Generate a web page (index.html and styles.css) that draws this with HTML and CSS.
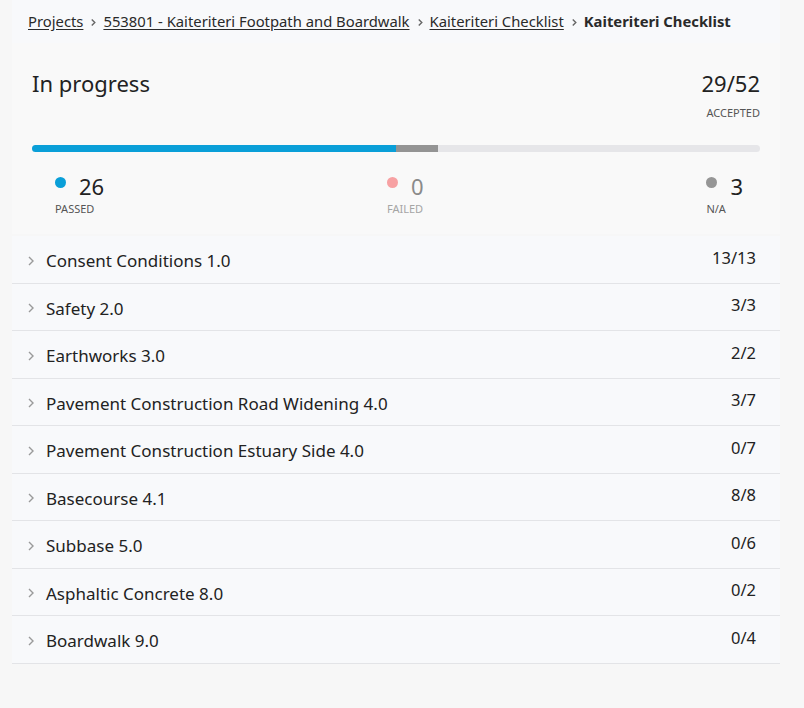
FILE: index.html
```html
<!DOCTYPE html>
<html lang="en">
<head>
<meta charset="utf-8">
<title>Kaiteriteri Checklist</title>
<link rel="stylesheet" href="styles.css">
</head>
<body>
<div class="page">
  <nav class="crumbs">
    <a href="#">Projects</a>
    <span class="sep"><svg viewBox="0 0 8 10" width="7" height="9"><path d="M2 1.5 L5.5 5 L2 8.5" fill="none" stroke="#666" stroke-width="1.6"/></svg></span>
    <a href="#">553801 - Kaiteriteri Footpath and Boardwalk</a>
    <span class="sep"><svg viewBox="0 0 8 10" width="7" height="9"><path d="M2 1.5 L5.5 5 L2 8.5" fill="none" stroke="#666" stroke-width="1.6"/></svg></span>
    <a href="#">Kaiteriteri Checklist</a>
    <span class="sep"><svg viewBox="0 0 8 10" width="7" height="9"><path d="M2 1.5 L5.5 5 L2 8.5" fill="none" stroke="#666" stroke-width="1.6"/></svg></span>
    <span class="current">Kaiteriteri Checklist</span>
  </nav>

  <section class="summary">
    <div class="summary-head">
      <h1 class="status">In progress</h1>
      <div class="accepted">
        <div class="big">29/52</div>
        <div class="label">ACCEPTED</div>
      </div>
    </div>
    <div class="bar">
      <div class="seg passed" style="width:50%"></div>
      <div class="seg na" style="width:5.77%"></div>
    </div>
    <div class="stats">
      <div class="stat">
        <div class="stat-row"><span class="dot blue"></span><span class="num">26</span></div>
        <div class="label">PASSED</div>
      </div>
      <div class="stat failed">
        <div class="stat-row"><span class="dot pink"></span><span class="num">0</span></div>
        <div class="label">FAILED</div>
      </div>
      <div class="stat">
        <div class="stat-row"><span class="dot grey"></span><span class="num">3</span></div>
        <div class="label">N/A</div>
      </div>
    </div>
  </section>

  <ul class="list">
    <li class="item"><span class="chev"><svg viewBox="0 0 8 12" width="8" height="12"><path d="M2 2 L6 6 L2 10" fill="none" stroke="#9a9a9a" stroke-width="1.4"/></svg></span><span class="name">Consent Conditions 1.0</span><span class="count">13/13</span></li>
    <li class="item"><span class="chev"><svg viewBox="0 0 8 12" width="8" height="12"><path d="M2 2 L6 6 L2 10" fill="none" stroke="#9a9a9a" stroke-width="1.4"/></svg></span><span class="name">Safety 2.0</span><span class="count">3/3</span></li>
    <li class="item"><span class="chev"><svg viewBox="0 0 8 12" width="8" height="12"><path d="M2 2 L6 6 L2 10" fill="none" stroke="#9a9a9a" stroke-width="1.4"/></svg></span><span class="name">Earthworks 3.0</span><span class="count">2/2</span></li>
    <li class="item"><span class="chev"><svg viewBox="0 0 8 12" width="8" height="12"><path d="M2 2 L6 6 L2 10" fill="none" stroke="#9a9a9a" stroke-width="1.4"/></svg></span><span class="name">Pavement Construction Road Widening 4.0</span><span class="count">3/7</span></li>
    <li class="item"><span class="chev"><svg viewBox="0 0 8 12" width="8" height="12"><path d="M2 2 L6 6 L2 10" fill="none" stroke="#9a9a9a" stroke-width="1.4"/></svg></span><span class="name">Pavement Construction Estuary Side 4.0</span><span class="count">0/7</span></li>
    <li class="item"><span class="chev"><svg viewBox="0 0 8 12" width="8" height="12"><path d="M2 2 L6 6 L2 10" fill="none" stroke="#9a9a9a" stroke-width="1.4"/></svg></span><span class="name">Basecourse 4.1</span><span class="count">8/8</span></li>
    <li class="item"><span class="chev"><svg viewBox="0 0 8 12" width="8" height="12"><path d="M2 2 L6 6 L2 10" fill="none" stroke="#9a9a9a" stroke-width="1.4"/></svg></span><span class="name">Subbase 5.0</span><span class="count">0/6</span></li>
    <li class="item"><span class="chev"><svg viewBox="0 0 8 12" width="8" height="12"><path d="M2 2 L6 6 L2 10" fill="none" stroke="#9a9a9a" stroke-width="1.4"/></svg></span><span class="name">Asphaltic Concrete 8.0</span><span class="count">0/2</span></li>
    <li class="item"><span class="chev"><svg viewBox="0 0 8 12" width="8" height="12"><path d="M2 2 L6 6 L2 10" fill="none" stroke="#9a9a9a" stroke-width="1.4"/></svg></span><span class="name">Boardwalk 9.0</span><span class="count">0/4</span></li>
  </ul>
</div>
</body>
</html>
```

FILE: styles.css
```css
* { box-sizing: border-box; }
html, body { margin: 0; padding: 0; }
body {
  background: #f7f7f7;
  font-family: "Noto Sans", "Open Sans", sans-serif;
  color: #222;
}
.page {
  width: 768px;
  margin-left: 12px;
}
.crumbs {
  height: 43px;
  background: #f8f9fb;
  display: flex;
  align-items: center;
  padding: 0 0 2px 16px;
  font-size: 14.8px;
  color: #2a2a2a;
}
.crumbs a {
  color: #2a2a2a;
  text-decoration: underline;
  text-underline-offset: 2px;
}
.crumbs .sep {
  display: flex;
  align-items: center;
  margin: 3px 6px 0 7px;
}
.crumbs .current { font-weight: 700; }

.summary {
  background: #f9f9f9;
  padding: 24px 20px 18px 20px;
}
.summary-head {
  display: flex;
  justify-content: space-between;
  align-items: flex-start;
}
.status {
  margin: 0;
  font-size: 22px;
  font-weight: 400;
  line-height: 32px;
  color: #222;
}
.accepted { text-align: right; }
.big {
  font-size: 22px;
  line-height: 32px;
  color: #222;
}
.label {
  font-size: 11px;
  line-height: 14px;
  color: #555;
  margin-top: 5px;
}
.accepted .label { margin-top: 7px; }
.bar {
  margin-top: 25px;
  height: 7px;
  border-radius: 4px;
  background: #e6e6e9;
  display: flex;
  overflow: hidden;
}
.seg { height: 100%; }
.seg.passed { background: #0a9fd8; }
.seg.na { background: #949494; }

.stats {
  display: flex;
  justify-content: space-between;
  padding: 0 17px 0 23px;
  margin-top: 21px;
}
.stat { display: flex; flex-direction: column; align-items: center; }
.stat-row { display: flex; align-items: center; gap: 13px; }
.dot {
  width: 11px;
  height: 11px;
  border-radius: 50%;
  margin-top: -8px;
}
.dot.blue { background: #0a9fd8; }
.dot.pink { background: #f7a1a3; }
.dot.grey { background: #969696; }
.num {
  font-size: 22px;
  line-height: 26px;
  color: #222;
}
.stat .label { margin-top: 3px; align-self: flex-start; }
.stat.failed .num { color: #8a8a8a; }
.stat.failed .label { color: #a5a5a5; }

.list {
  list-style: none;
  margin: 2px 0 0 0;
  padding: 0;
  background: #f8f9fb;
}
.item {
  display: flex;
  align-items: center;
  height: 47.5px;
  border-bottom: 1px solid #e3e4e7;
  padding: 3px 24px 0 15px;
  font-size: 17px;
  color: #222;
}
.chev { display: flex; align-items: center; width: 19px; }
.name { flex: 1; }
.count { margin-top: -7px; font-size: 16.5px; }
```
